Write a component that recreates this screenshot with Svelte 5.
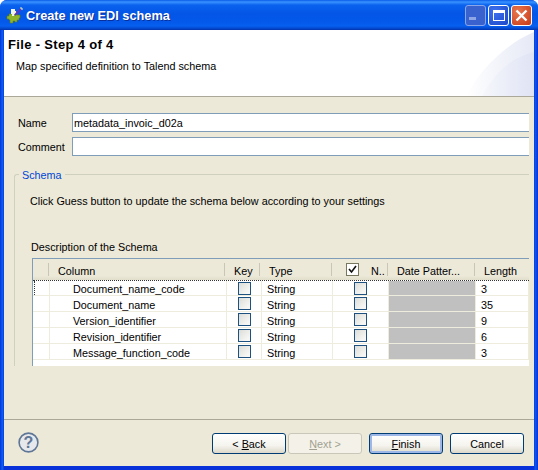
<script>
  const rows = [
    { name: 'Document_name_code', length: '3' },
    { name: 'Document_name', length: '35' },
    { name: 'Version_identifier', length: '9' },
    { name: 'Revision_identifier', length: '6' },
    { name: 'Message_function_code', length: '3' }
  ]
</script>

<div class="window">
  <div class="titlebar">
    <svg class="app-icon" width="17" height="17" viewBox="0 0 17 17" aria-hidden="true">
      <path d="M1 9h2V7h3V5h5v3h3v3h-1v2h-2v2H9v-1H7v2H4v-3H3v-1H1z" fill="#8fb52a" stroke="#5f7d18" stroke-width="0.6" />
      <path d="M5 2h4v2h1v3H8v2H6V7H5z" fill="#f2f4e4" />
      <path d="M9 8l6-6" stroke="#5a35c4" stroke-width="2" />
      <path d="M14 1h2v2" stroke="#f6f0a0" stroke-width="1" fill="none" />
    </svg>
    <span class="title">Create new EDI schema</span>
    <div class="controls">
      <div class="ctl ctl-min"><span></span></div>
      <div class="ctl ctl-max"><span></span></div>
      <div class="ctl ctl-close">
        <svg width="13" height="13" viewBox="0 0 13 13" aria-hidden="true">
          <path d="M1.5 1.5l10 10M11.5 1.5l-10 10" stroke="#fff" stroke-width="2.4" />
        </svg>
      </div>
    </div>
  </div>

  <div class="client">
    <header class="banner">
      <h1>File - Step 4 of 4</h1>
      <p>Map specified definition to Talend schema</p>
      <svg class="swoosh" width="70" height="66" viewBox="0 0 70 66" aria-hidden="true">
        <defs>
          <linearGradient id="fade" x1="0" y1="0" x2="1" y2="0">
            <stop offset="0" stop-color="#fff" />
            <stop offset="1" stop-color="#e6e9f6" />
          </linearGradient>
          <linearGradient id="fade2" x1="0" y1="0" x2="1" y2="0">
            <stop offset="0" stop-color="#f6f7fc" />
            <stop offset="1" stop-color="#dfe3f4" />
          </linearGradient>
        </defs>
        <path d="M2 66C16 40 40 15 70 2V66Z" fill="url(#fade)" />
        <path d="M18 66C30 45 45 28 70 22V66Z" fill="url(#fade2)" />
      </svg>
    </header>

    <main class="body">
      <div class="field">
        <label for="name">Name</label>
        <input id="name" value="metadata_invoic_d02a" />
      </div>
      <div class="field">
        <label for="comment">Comment</label>
        <input id="comment" value="" />
      </div>

      <fieldset class="schema">
        <legend>Schema</legend>
        <p class="hint">Click Guess button to update the schema below according to your settings</p>
        <div class="desc">Description of the Schema</div>
        <div class="table">
          <div class="row head">
            <div class="c h-sel"></div>
            <div class="c h-col">Column</div>
            <div class="c h-key">Key</div>
            <div class="c h-type">Type</div>
            <div class="c h-null">
              <span class="hcheck">
                <svg width="11" height="11" viewBox="0 0 11 11" aria-hidden="true">
                  <path d="M2 5l2.5 3L9 2" fill="none" stroke="#111" stroke-width="1.6" />
                </svg>
              </span>
              <span>N..</span>
            </div>
            <div class="c h-date">Date Patter...</div>
            <div class="c h-len">Length</div>
          </div>
          {#each rows as row, i}
            <div class="row" class:first={i === 0}>
              <div class="c c-sel"></div>
              <div class="c c-col">{row.name}</div>
              <div class="c c-key"><span class="box"></span></div>
              <div class="c c-type">String</div>
              <div class="c c-null"><span class="box"></span></div>
              <div class="c c-date"></div>
              <div class="c c-len">{row.length}</div>
            </div>
          {/each}
          <div class="tail"></div>
        </div>
      </fieldset>
    </main>

    <footer class="footer">
      <svg class="help" width="21" height="21" viewBox="0 0 21 21" aria-hidden="true">
        <circle cx="10.5" cy="10.5" r="9.4" fill="#e6e8ec" stroke="#5f7696" stroke-width="1.6" />
        <text x="10.5" y="16" text-anchor="middle" class="help-mark">?</text>
      </svg>
      <div class="buttons">
        <button class="btn">&lt; <u>B</u>ack</button>
        <button class="btn next" disabled><u>N</u>ext &gt;</button>
        <button class="btn finish"><u>F</u>inish</button>
        <button class="btn">Cancel</button>
      </div>
    </footer>
  </div>
</div>

<style>
  :global(body) {
    margin: 0;
    background: #fff;
  }

  .window {
    width: 538px;
    height: 470px;
    display: flex;
    flex-direction: column;
    box-sizing: border-box;
    padding: 0 4px 4px;
    background: linear-gradient(90deg, #0831d9 0, #0a5bf0 2px, #0a5bf0 3px, #0831d9 4px, #0831d9 534px, #0a5bf0 535px, #0831d9 538px);
    border-radius: 7px 7px 0 0;
    font-family: "Liberation Sans", sans-serif;
    font-size: 10.8px;
    color: #000;
    overflow: hidden;
  }

  .titlebar {
    height: 30px;
    flex: none;
    margin: 0 -4px;
    padding: 0 6px;
    display: flex;
    align-items: center;
    gap: 3px;
    background: linear-gradient(180deg, #0a5ce8 0, #3a93ff 2px, #0a62ee 5px, #0355e6 14px, #0459ea 22px, #0660f0 26px, #0342c4 29px, #0030a8 30px);
  }

  .app-icon {
    flex: none;
  }

  .title {
    color: #fff;
    font-weight: 700;
    font-size: 12.75px;
    text-shadow: 1px 1px 0 #0b2f9a;
  }

  .controls {
    margin-left: auto;
    display: flex;
    gap: 2px;
  }

  .ctl {
    width: 21px;
    height: 21px;
    box-sizing: border-box;
    border: 1px solid #fff;
    border-radius: 3px;
    display: flex;
    align-items: center;
    justify-content: center;
  }

  .ctl-min {
    background: #3a62cf;
    border-color: #8aa5e8;
  }
  .ctl-min span {
    width: 7px;
    height: 3px;
    background: #8ea6e6;
    margin: 7px 6px 0 0;
  }
  .ctl-max {
    background: radial-gradient(circle at 30% 30%, #3f72ee, #1c48c8);
  }
  .ctl-max span {
    width: 12px;
    height: 11px;
    box-sizing: border-box;
    border: 1px solid #fff;
    border-top-width: 3px;
  }
  .ctl-close {
    background: radial-gradient(circle at 30% 30%, #e8774f, #c83a16);
  }

  .client {
    flex: 1;
    min-height: 0;
    display: flex;
    flex-direction: column;
    background: #ece9d8;
  }

  .banner {
    height: 67px;
    flex: none;
    box-sizing: border-box;
    background: #fff;
    border-bottom: 1px solid #aca899;
    padding-top: 6px;
    position: relative;
  }

  .swoosh {
    position: absolute;
    right: 0;
    top: 0;
  }

  h1 {
    margin: 0 0 0 4px;
    font-size: 13px;
    font-weight: 700;
    letter-spacing: 0.33px;
    line-height: 17px;
  }

  .banner p {
    margin: 6px 0 0 12px;
    line-height: 15px;
  }

  .body {
    flex: 1;
    min-height: 0;
    padding: 16px 5px 0 14px;
  }

  .field {
    display: flex;
    align-items: center;
    height: 19px;
    margin-bottom: 5px;
  }

  .field label {
    width: 54px;
    flex: none;
  }

  .field input {
    flex: 1;
    min-width: 0;
    height: 19px;
    box-sizing: border-box;
    border: 1px solid #7f9db9;
    border-right: none;
    padding: 0 1px;
    font: inherit;
    background: #fff;
    outline: none;
  }

  .schema {
    margin: 10px 0 0 -4px;
    padding: 0;
    border: 1px solid #d0d0bf;
    border-right: none;
    border-bottom: none;
    border-radius: 3px 0 0 0;
    height: 200px;
    box-sizing: border-box;
    min-inline-size: 0;
  }

  legend {
    color: #0046d5;
    padding: 2px 3px 0;
    margin-left: 4px;
    line-height: 14px;
  }

  .hint {
    margin: 12px 0 0 15px;
    line-height: 15px;
  }

  .desc {
    margin: 31px 0 0 16px;
    line-height: 15px;
  }

  .table {
    margin: 3px 0 0 17px;
    border-left: 1px solid #7f9db9;
    border-top: 1px solid #7f9db9;
    overflow: hidden;
  }

  .row {
    display: flex;
    height: 16px;
    background: #fff;
    border-bottom: 1px solid #eeecdd;
    box-sizing: border-box;
  }

  .row.head {
    height: 21px;
    background: linear-gradient(180deg, #ece9d8 0, #ece9d8 17px, #e0ddcb 21px);
    border-bottom: none;
  }

  .row.first {
    border-top: 1px dotted #333;
  }

  .c {
    flex: none;
    box-sizing: border-box;
    display: flex;
    align-items: center;
    white-space: nowrap;
    overflow: hidden;
  }

  .row:not(.head) .c {
    border-right: 1px solid #eeecdd;
  }

  .row.head .c {
    padding-left: 9px;
    padding-top: 2px;
    background: linear-gradient(#c9c6b5, #c9c6b5) right 4px / 1px 13px no-repeat;
  }

  .h-sel { width: 16px; }
  .h-col { width: 176px; }
  .h-key { width: 35px; }
  .h-type { width: 72px; }
  .row.head .h-null { width: 56px; padding-left: 14px; gap: 12px; padding-top: 0; }
  .h-null span:last-child { margin-top: 2px; }
  .h-date { width: 87px; }
  .row.head .h-len { width: 54px; background: none; }

  .c-sel { width: 17px; }
  .row.first .c-sel { border-left: 1px dotted #333; margin-left: 1px; width: 16px; }
  .c-col { width: 177px; padding: 2px 0 0 23px; }
  .c-key { width: 35px; justify-content: center; }
  .c-type { width: 71px; padding: 2px 0 0 5px; }
  .c-null { width: 56px; padding-left: 21px; }
  .c-date { width: 87px; background: #c0c0c0; }
  .c-len { width: 53px; padding: 2px 0 0 5px; }
  .row.first .c-col, .row.first .c-type, .row.first .c-len { padding-top: 1px; }

  .box {
    width: 13px;
    height: 13px;
    flex: none;
    box-sizing: border-box;
    border: 1px solid #1c5180;
    background: linear-gradient(135deg, #dcdcd7, #f6f6f4 80%);
  }

  .hcheck {
    width: 13px;
    height: 13px;
    flex: none;
    box-sizing: border-box;
    border: 1px solid #77775f;
    background: #fff;
    display: flex;
    align-items: center;
    justify-content: center;
  }

  .tail {
    height: 6px;
    background: #fff;
  }

  .footer {
    height: 47px;
    flex: none;
    box-sizing: border-box;
    border-top: 1px solid #aca899;
    display: flex;
    align-items: flex-start;
    padding: 12px 10px 0 14px;
  }

  .help-mark {
    font-family: "Liberation Sans", sans-serif;
    font-weight: 700;
    font-size: 16px;
    fill: #5f7696;
  }

  .buttons {
    margin-left: auto;
    display: flex;
    gap: 7px;
    margin-top: 1px;
  }

  .btn {
    width: 74px;
    height: 21px;
    box-sizing: border-box;
    padding: 0;
    font: inherit;
    color: #000;
    border: 1px solid #003c74;
    border-radius: 3px;
    background: linear-gradient(180deg, #fff 0, #f5f4ee 60%, #dcd8ca 100%);
  }

  .btn:first-child {
    margin-right: -5px;
  }

  .next {
    border-color: #c9c7ba;
    background: #f4f2e8;
    color: #a1a192;
  }

  .finish {
    box-shadow: inset 0 0 0 2px #9db8e8;
  }
</style>
